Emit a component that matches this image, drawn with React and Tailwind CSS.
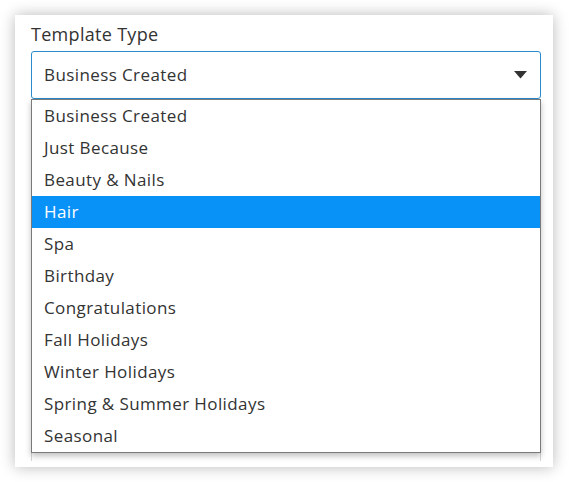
import { useState } from 'react';

const options = [
  'Business Created',
  'Just Because',
  'Beauty & Nails',
  'Hair',
  'Spa',
  'Birthday',
  'Congratulations',
  'Fall Holidays',
  'Winter Holidays',
  'Spring & Summer Holidays',
  'Seasonal',
];

function App() {
  const [active] = useState('Hair');

  return (
    <div className="w-[569px] h-[482px] bg-white overflow-hidden font-['Open_Sans',sans-serif] text-[#333]">
      <div className="ml-[15px] mt-[15px] w-[538px] h-[452px] bg-white shadow-[0_0_14px_rgba(0,0,0,0.28)] pl-4 pr-[12px] pt-[6px]">
        <div className="text-[18px] leading-[26px] mb-[4px] tracking-[0.3px]">Template Type</div>

        {/* select + open list */}
        <div className="relative">
          <div className="h-[48px] border border-[#2a8ccc] rounded-[3px] flex items-center justify-between pl-[12px] pr-[13px] text-[17px] tracking-[0.4px]">
            <span>Business Created</span>
            <svg width="13" height="8" viewBox="0 0 13 8">
              <path d="M0 0 H13 L6.5 7.5 Z" fill="#333" />
            </svg>
          </div>

          {/* field underneath the list */}
          <div className="mt-[22px] h-[340px] border-x border-[#d6d6d6]" />

          <div className="absolute left-0 right-0 top-[48px] bg-white border border-[#7a7a7a] shadow-[0_3px_6px_rgba(0,0,0,0.25)]">
            {options.map((o) => (
              <div
                key={o}
                className={
                  o === active
                    ? 'h-[32px] flex items-center pl-[12px] text-[17px] tracking-[0.4px] bg-[#0891f7] text-white'
                    : 'h-[32px] flex items-center pl-[12px] text-[17px] tracking-[0.4px]'
                }
              >
                {o}
              </div>
            ))}
          </div>
        </div>
      </div>
    </div>
  );
}

export default App;
